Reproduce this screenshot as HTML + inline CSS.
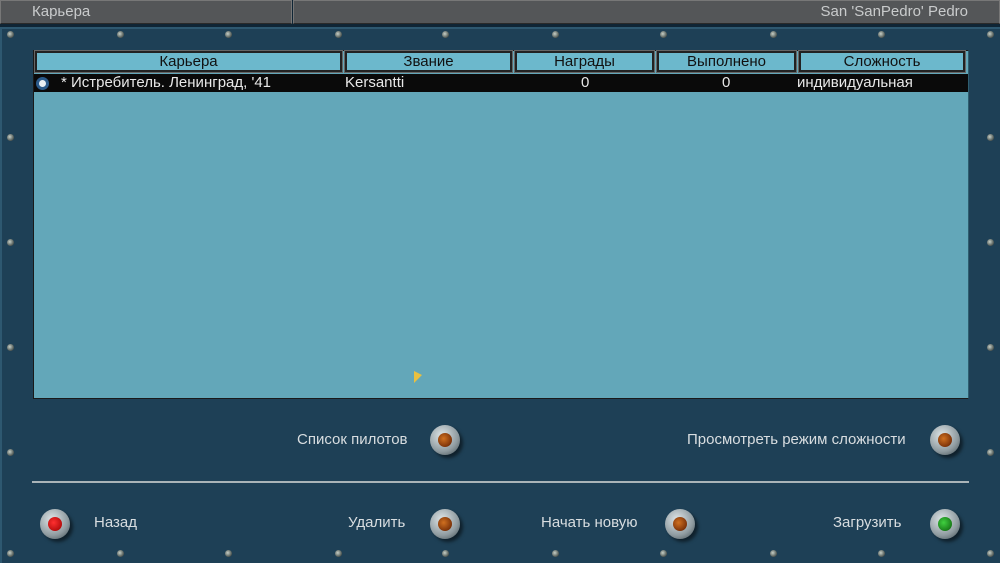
<!DOCTYPE html>
<html><head><meta charset="utf-8"><style>
*{margin:0;padding:0;box-sizing:border-box}
body{width:1000px;height:563px;overflow:hidden;background:#0f2535;font-family:"Liberation Sans","DejaVu Sans",sans-serif;position:relative}
.top{position:absolute;top:0;height:24px;background:#545658;border:1px solid #777;border-bottom-color:#2a2a2a;color:#c9cbcc;font-size:15px;line-height:22px}
.panel{position:absolute;left:0;top:27px;width:1000px;height:536px;background:#1e4056;border-top:2px solid #2e5870;border-left:2px solid #2e5870}
.screw{position:absolute;width:7px;height:7px;border-radius:50%;background:radial-gradient(circle at 40% 40%,#c8d0c8,#5a6460 60%,#222 100%)}
.tbl{position:absolute;left:33px;top:50px;width:936px;height:349px;background:#63a7b9;border:1px solid #1a1a1a;border-right-color:#2f5e6f}
.h{position:absolute;top:51px;height:21px;background:#6cb8cc;border:2px solid #222;outline:1px solid #666;color:#111;font-size:15px;text-align:center;line-height:17px}
.row{position:absolute;left:34px;top:74px;width:934px;height:18px;background:#0a0a0a;color:#e8e8e8;font-size:15px;line-height:18px}
.row span{position:absolute}
.lbl{position:absolute;color:#d8dde0;font-size:15px}
.btn{position:absolute;width:30px;height:30px;border-radius:50%;background:radial-gradient(circle at 40% 35%,#dfe6e8,#8f9ba0 60%,#3c484c);box-shadow:3px 3px 3px rgba(0,0,0,.5)}
.btn i{position:absolute;left:8px;top:8px;width:14px;height:14px;border-radius:50%}
</style></head><body>
<div class="top" style="left:0;width:292px;padding-left:31px">Карьера</div>
<div class="top" style="left:293px;width:707px;text-align:right;padding-right:31px">San 'SanPedro' Pedro</div>
<div class="panel"></div>
<div class="tbl"></div>
<div class="h" style="left:35px;width:307px">Карьера</div>
<div class="h" style="left:345px;width:167px">Звание</div>
<div class="h" style="left:515px;width:139px">Награды</div>
<div class="h" style="left:657px;width:139px">Выполнено</div>
<div class="h" style="left:799px;width:166px">Сложность</div>
<div class="row">
<span style="left:2px;top:3px;width:13px;height:13px;border-radius:50%;background:#e8eef2;border:3px solid #2a5a8a"></span>
<span style="left:27px">* Истребитель. Ленинград, '41</span>
<span style="left:311px">Kersantti</span>
<span style="left:547px">0</span>
<span style="left:688px">0</span>
<span style="left:763px">индивидуальная</span>
</div>
<div style="position:absolute;left:414px;top:371px;width:0;height:0;border-left:8px solid #e8c040;border-bottom:8px solid transparent;border-top:4px solid transparent"></div>
<div class="lbl" style="left:297px;top:431px">Список пилотов</div>
<div class="lbl" style="left:687px;top:431px">Просмотреть режим сложности</div>
<div style="position:absolute;left:32px;top:481px;width:937px;height:2px;background:#aab4b8"></div>
<div class="lbl" style="left:94px;top:514px">Назад</div>
<div class="lbl" style="left:348px;top:514px">Удалить</div>
<div class="lbl" style="left:541px;top:514px">Начать новую</div>
<div class="lbl" style="left:833px;top:514px">Загрузить</div>
<div class="btn" style="left:430px;top:425px"><i style="background:radial-gradient(circle at 40% 40%,#d07020,#5a1a00)"></i></div>
<div class="btn" style="left:930px;top:425px"><i style="background:radial-gradient(circle at 40% 40%,#d07020,#5a1a00)"></i></div>
<div class="btn" style="left:40px;top:509px"><i style="background:radial-gradient(circle at 40% 40%,#ff3030,#900)"></i></div>
<div class="btn" style="left:430px;top:509px"><i style="background:radial-gradient(circle at 40% 40%,#d07020,#5a1a00)"></i></div>
<div class="btn" style="left:665px;top:509px"><i style="background:radial-gradient(circle at 40% 40%,#d07020,#5a1a00)"></i></div>
<div class="btn" style="left:930px;top:509px"><i style="background:radial-gradient(circle at 40% 40%,#40d040,#0a5a0a)"></i></div>
<div class="screw" style="left:7px;top:31px"></div><div class="screw" style="left:117px;top:31px"></div><div class="screw" style="left:225px;top:31px"></div><div class="screw" style="left:335px;top:31px"></div><div class="screw" style="left:442px;top:31px"></div><div class="screw" style="left:552px;top:31px"></div><div class="screw" style="left:660px;top:31px"></div><div class="screw" style="left:770px;top:31px"></div><div class="screw" style="left:878px;top:31px"></div><div class="screw" style="left:987px;top:31px"></div>
<div class="screw" style="left:7px;top:550px"></div><div class="screw" style="left:117px;top:550px"></div><div class="screw" style="left:225px;top:550px"></div><div class="screw" style="left:335px;top:550px"></div><div class="screw" style="left:442px;top:550px"></div><div class="screw" style="left:552px;top:550px"></div><div class="screw" style="left:660px;top:550px"></div><div class="screw" style="left:770px;top:550px"></div><div class="screw" style="left:878px;top:550px"></div><div class="screw" style="left:987px;top:550px"></div>
<div class="screw" style="left:7px;top:134px"></div><div class="screw" style="left:7px;top:239px"></div><div class="screw" style="left:7px;top:344px"></div><div class="screw" style="left:7px;top:449px"></div>
<div class="screw" style="left:987px;top:134px"></div><div class="screw" style="left:987px;top:239px"></div><div class="screw" style="left:987px;top:344px"></div><div class="screw" style="left:987px;top:449px"></div>
</body></html>
